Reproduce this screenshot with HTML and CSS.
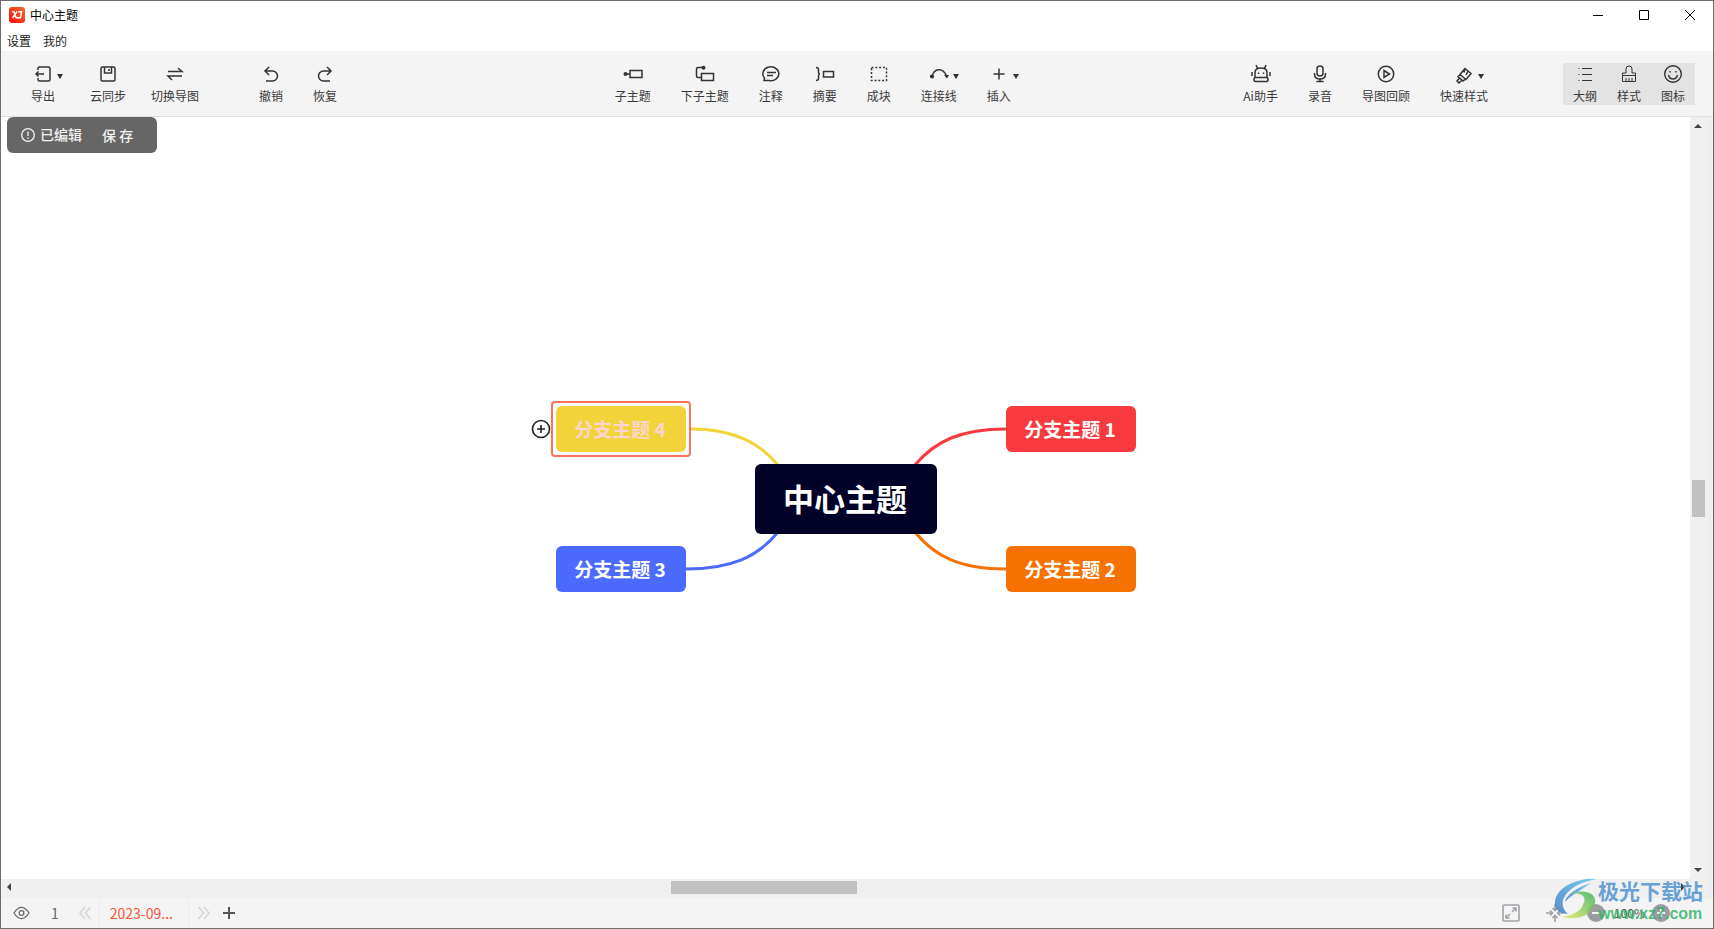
FILE: index.html
```html
<!DOCTYPE html>
<html lang="zh-CN">
<head>
<meta charset="utf-8">
<title>中心主题</title>
<link rel="stylesheet" href="styles.css">
</head>
<body>
<div class="window">
  <header class="titlebar">
    <svg class="app-logo" viewBox="0 0 16 16"><defs><linearGradient id="lg" x1="1" y1="0" x2="0" y2="1"><stop offset="0" stop-color="#f26b2c"/><stop offset="1" stop-color="#f80d0d"/></linearGradient></defs><rect width="16" height="16" rx="3" fill="url(#lg)"/><path d="M3 4.700h1.800l2.400 6.100H9M8 4.500l-4.500 6.500M9.200 4.700h3.300L11.500 10.800H9" fill="none" stroke="#fff" stroke-width="1.500"/></svg>
    <span class="app-title">中心主题</span>
    <div class="window-buttons">
      <button aria-label="最小化"><svg viewBox="0 0 10 10"><path d="M0 5.500h10"/></svg></button>
      <button aria-label="最大化"><svg viewBox="0 0 10 10"><path d="M.5.5h9v9h-9z"/></svg></button>
      <button aria-label="关闭"><svg viewBox="0 0 10 10"><path d="M0 0l10 10M10 0L0 10"/></svg></button>
    </div>
  </header>
  <nav class="menu"><button>设置</button><button>我的</button></nav>

  <div class="toolbar">
    <div class="tools tools-file">
      <button class="tool tool-export"><span class="glyph"><svg viewBox="0 0 20 20"><path d="M5 6V4.500Q5 3 6.500 3h9Q17 3 17 4.500v11Q17 17 15.500 17h-9Q5 17 5 15.500V14M3 10h8M5.500 7.500L3 10l2.500 2.500"/></svg><i class="caret"></i></span>导出</button>
      <button class="tool"><span class="glyph"><svg viewBox="0 0 20 20"><rect x="3" y="3" width="14" height="14" rx="1.500"/><path d="M6.500 3v6h7V3M11 5v2"/></svg></span>云同步</button>
      <button class="tool tool-switch"><span class="glyph"><svg viewBox="0 0 20 20"><path d="M3 7.500h14L13 4M17 12H3l4 4"/></svg></span>切换导图</button>
      <button class="tool"><span class="glyph"><svg viewBox="0 0 20 20"><path d="M8 3L4 7l4 4M4 7h7.500a5 5 0 0 1 0 10H5"/></svg></span>撤销</button>
      <button class="tool"><span class="glyph"><svg viewBox="0 0 20 20"><path d="M12 3l4 4-4 4M16 7H8.500a5 5 0 0 0 0 10H15"/></svg></span>恢复</button>
    </div>
    <div class="tools tools-topic">
      <button class="tool"><span class="glyph"><svg viewBox="0 0 20 20"><path d="M2 10h5M7 6.500h12v7H7z"/><circle class="solid" cx="2.500" cy="10" r="2"/></svg></span>子主题</button>
      <button class="tool"><span class="glyph"><svg viewBox="0 0 20 20"><path d="M8 3.500H3Q1.500 3.500 1.500 5v7q0 1.500 1.500 1.500h3"/><path d="M6.500 9.500h12v7h-12z"/><circle class="solid" cx="8.500" cy="3.800" r="2"/></svg></span>下子主题</button>
      <button class="tool"><span class="glyph"><svg viewBox="0 0 20 20"><path d="M3.500 14A8 6.900 0 1 1 8 16.500H3zM6 8.500h9M6 11.500h6"/></svg></span>注释</button>
      <button class="tool"><span class="glyph"><svg viewBox="0 0 20 20"><path d="M1 3.500q2.500 0 2.500 2v2.500q0 2 1.500 2-1.500 0-1.500 2v2.500q0 2-2.500 2M8.500 7.500h10v5.500h-10z"/></svg></span>摘要</button>
      <button class="tool"><span class="glyph"><svg viewBox="0 0 20 20"><path stroke-dasharray="2 1.800" d="M2.500 3.500h15v13h-15z"/></svg></span>成块</button>
      <button class="tool"><span class="glyph"><svg viewBox="0 0 20 20"><path d="M3 12.500C5 4 14 3 17.500 12"/><circle class="solid" cx="3" cy="12.500" r="2.100"/><path class="solid" d="M15 11h5l-2 3.500z"/></svg><i class="caret"></i></span>连接线</button>
      <button class="tool"><span class="glyph"><svg viewBox="0 0 20 20"><path d="M10 4.500v11M4.500 10h11"/></svg><i class="caret"></i></span>插入</button>
    </div>
    <div class="tools tools-extra">
      <button class="tool"><span class="glyph"><svg viewBox="0 0 20 20"><path d="M4 13V8.500Q4 4 10 4t6 4.500V13M5 1l1.500 3.500M15 1l-1.500 3.500M1 8v4M19 8v4M4.500 13.500h11q1.500 0 1.500 2t-1.500 2h-11q-1.500 0-1.500-2t1.500-2zM7.500 8.500v1.500M12.500 8.500v1.500"/></svg></span>Ai助手</button>
      <button class="tool"><span class="glyph"><svg viewBox="0 0 20 20"><rect x="7" y="2" width="6" height="10" rx="3"/><path d="M4.500 9v1q0 5 5.500 5t5.500-5V9M10 15v2.500M6.500 17.500h7"/></svg></span>录音</button>
      <button class="tool"><span class="glyph"><svg viewBox="0 0 20 20"><circle cx="10" cy="10" r="7.700"/><path d="M8 6.500l5.500 3.500L8 13.500z"/></svg></span>导图回顾</button>
      <button class="tool"><span class="glyph"><svg viewBox="0 0 20 20"><path d="M11 4.500l6 5-5 6-6-5zM6.500 10.500L4 12.500l5 4.500 2.500-2M5.500 14L3 17l2 2 3-3M11 4.500l-1 4M14 7l-2 4"/></svg><i class="caret"></i></span>快速样式</button>
    </div>
    <div class="panel-switch">
      <button class="tool thin"><span class="glyph"><svg viewBox="0 0 20 20"><path d="M7 4.500h10M7 10.500h10M7 16.500h10M3.500 4.500h1M3.500 10.500h1M3.500 16.500h1"/></svg></span>大纲</button>
      <button class="tool thin"><span class="glyph"><svg viewBox="0 0 20 20"><path d="M3.500 11.500V9H7V5a3 3 0 0 1 6 0v4h3.500v2.500zM3.500 11.500V17.500h13v-6M7 14v3.500M10 14v3.500M13 14v3.500"/></svg></span>样式</button>
      <button class="tool thin"><span class="glyph"><svg viewBox="0 0 20 20"><circle cx="10" cy="10" r="8.300" stroke-width="1.400"/><path stroke-width="1.400" d="M5.500 11q1 4 4.500 4t4.500-4M7 7v1.500M13 7v1.500"/></svg></span>图标</button>
    </div>
  </div>

  <main class="workspace">
    <section class="canvas">
      <div class="save-toast"><svg viewBox="0 0 14 14"><circle cx="7" cy="7" r="6.300"/><path d="M7 3.500v4.500M7 9.500V11"/></svg><span>已编辑</span><button>保 存</button></div>
      <div class="map">
        <svg class="links" viewBox="0 0 610 192"><path stroke="#f2d33a" d="M160 28c40 0 67 12 87 36"/><path stroke="#4c6bfe" d="M155 168c45 0 72-12 92-37"/><path stroke="#f63a3f" d="M475 28c-45 0-71 12-91 36"/><path stroke="#f77103" d="M475 168c-45 0-71-12-91-37"/></svg>
        <button class="add-node" aria-label="添加"><svg viewBox="0 0 20 20"><circle cx="10" cy="10" r="8.500"/><path d="M10 6v8M6 10h8"/></svg></button>
        <div class="selection"></div>
        <div class="node node-4">分支主题 4</div>
        <div class="node node-3">分支主题 3</div>
        <div class="node node-1">分支主题 1</div>
        <div class="node node-2">分支主题 2</div>
        <div class="node node-root">中心主题</div>
      </div>
    </section>
    <div class="scroll-y"><i class="arrow up"></i><i class="thumb"></i><i class="arrow down"></i></div>
    <div class="scroll-x"><i class="arrow left"></i><i class="thumb"></i><i class="arrow right"></i></div>
  </main>

  <footer class="statusbar">
    <button class="eye" aria-label="预览"><svg viewBox="0 0 18 14"><path d="M1 7q8-12 16 0-8 12-16 0z"/><circle cx="9" cy="7" r="2.500"/></svg></button>
    <span class="page-count">1</span>
    <button class="chevrons" aria-label="上一页"><svg viewBox="0 0 12 14"><path d="M6 1L1 7l5 6M11.500 1l-5 6 5 6"/></svg></button>
    <button class="sheet">2023-09...</button>
    <button class="chevrons" aria-label="下一页"><svg viewBox="0 0 12 14"><path d="M.5 1l5 6-5 6M6 1l5 6-5 6"/></svg></button>
    <button class="add-sheet" aria-label="新建"><svg viewBox="0 0 12 12"><path d="M6 0v12M0 6h12"/></svg></button>
    <div class="zoom">
      <button aria-label="全屏"><svg class="line" viewBox="0 0 18 18"><rect x="1" y="1" width="16" height="16" rx="1"/><path d="M10.500 4H14v3.500M14 4l-4 4M4 10.500V14h3.500M4 14l4-4"/></svg></button>
      <button aria-label="适应画布"><svg class="line" viewBox="0 0 18 18"><path d="M0 9h6M4 6.500L6.500 9 4 11.500M18 9h-6M14 6.500L11.500 9l2.500 2.500M9 0v6M6.500 4L9 6.500 11.500 4M9 18v-6M6.500 14L9 11.500l2.500 2.500"/></svg></button>
      <div class="zoom-level"><button aria-label="缩小"><svg viewBox="0 0 18 18"><circle cx="9" cy="9" r="9" fill="#9b9ca3"/><path d="M5 9h8" stroke="#f4f4f4" stroke-width="2"/></svg></button>
      <span class="percent">100%</span>
      <button aria-label="放大"><svg viewBox="0 0 18 18"><circle cx="9" cy="9" r="9" fill="#9b9ca3"/><path d="M5 9h8M9 5v8" stroke="#f4f4f4" stroke-width="2"/></svg></button></div>
    </div>
  </footer>

  <div class="watermark">
    <svg viewBox="0 0 44 42"><defs><linearGradient id="blue" x1="1" y1="0" x2="0" y2="1"><stop offset="0" stop-color="#5fc4ee"/><stop offset="1" stop-color="#3678c4"/></linearGradient><linearGradient id="green" x1="1" y1="0" x2="0" y2="1"><stop offset="0" stop-color="#35b25a"/><stop offset="1" stop-color="#e6e860"/></linearGradient></defs><path fill="url(#blue)" d="M43 1C25-1 2 9 1 24c-1 7 4 11 13 12-8-7-7-16 2-24C23 6 32 3 43 1z"/><path fill="url(#blue)" d="M37 5C23 9 12 17 11 24c6-7 15-11 26-19z"/><path fill="url(#green)" d="M16 16c11-2 16 2 14 8-2 8-9 13-22 15 17 4 30-2 33-14 2-10-11-15-25-9z"/></svg>
    <div class="watermark-text"><span class="wm-name">极光下载站</span><span class="wm-url">www.xz7.com</span></div>
  </div>
</div>
</body>
</html>
```
FILE: styles.css
```css
* { box-sizing: border-box; }
html, body { height: 100%; }
body { margin: 0; font-family: "Noto Sans CJK SC", sans-serif; font-size: 12px; color: #222; }
button { border: 0; margin: 0; padding: 0; background: none; font: inherit; color: inherit; cursor: pointer; }
svg { display: block; fill: none; }

.window { position: relative; display: flex; flex-direction: column; height: 100vh; border: 1px solid #6c6c6c; background: #fff; overflow: hidden; }

.titlebar { display: flex; align-items: center; height: 28px; padding-left: 8px; color: #000; }
.app-logo { width: 16px; height: 16px; margin-right: 5px; }
.app-title { line-height: 18px; padding-bottom: 1px; }
.window-buttons { display: flex; margin-left: auto; }
.window-buttons button { width: 46px; height: 28px; display: grid; place-items: center; }
.window-buttons svg { width: 10px; height: 10px; stroke: #000; }

.menu { display: flex; align-items: center; gap: 12px; height: 22px; padding: 2px 0 0 6px; line-height: 20px; }

.toolbar { display: flex; align-items: center; height: 66px; background: #f4f4f4; border-bottom: 1px solid #dfdfdf; padding: 0 18px 0 15px; color: #3a3a3a; }
.tools, .panel-switch { display: flex; }
.tools-file { flex: 11 0 auto; }
.tools-topic { flex: 9 0 auto; }
.tool { display: flex; flex-direction: column; align-items: center; height: 42px; padding: 0 15px; line-height: 18px; }
.tool-export { margin-right: 5px; }
.tool-switch { margin: 0 30px 0 -5px; }
.glyph { position: relative; display: block; padding: 1px 0 3px; }
.glyph svg { width: 20px; height: 20px; stroke: #333; stroke-width: 1.5; }
.solid { fill: #333; stroke: none; }
.caret { position: absolute; left: 24px; top: 11px; border: 3px solid transparent; border-top: 5px solid #333; border-bottom: 0; }
.panel-switch { margin-left: 60px; background: #e3e3e3; }
.thin { padding: 0 10px; }
.thin svg { stroke-width: 1; }

.workspace { flex: 1; min-height: 0; display: grid; grid-template: minmax(0, 1fr) 18px / minmax(0, 1fr) 18px; padding-right: 5px; background: #eceef2; }
.canvas { position: relative; background: #fff; display: grid; place-items: center; overflow: hidden; }
.save-toast { position: absolute; left: 6px; top: 0; display: flex; align-items: center; width: 150px; height: 36px; padding-left: 14px; border-radius: 6px; background: #666; color: #f2f2f2; font-size: 14px; font-weight: 500; }
.save-toast svg { width: 14px; height: 14px; stroke: #f2f2f2; stroke-width: 1.3; margin-right: 5px; }
.save-toast span { padding-bottom: 2px; }
.save-toast button { margin-left: 20px; }

.map { position: relative; width: 610px; height: 192px; margin: 0 19px 2px 0; }
.links { position: absolute; inset: 0; stroke-width: 3; }
.node { position: absolute; display: grid; place-items: center; width: 130px; height: 46px; padding: 0 2px 2px 0; border-radius: 6px; color: #fff; font-size: 19px; font-weight: 700; white-space: nowrap; }
.node-1 { left: 475px; top: 5px; background: #f63a3f; }
.node-2 { left: 475px; top: 145px; background: #f77103; }
.node-3 { left: 25px; top: 145px; background: #4c6bfe; }
.node-4 { left: 25px; top: 5px; background: #f2d33a; color: #fbd5cf; }
.node-root { left: 224px; top: 63px; width: 182px; height: 70px; padding-bottom: 4px; background: #010127; font-size: 31px; }
.selection { position: absolute; left: 20px; top: 0; width: 140px; height: 56px; border: 2px solid #fb735c; border-radius: 4px; }
.add-node { position: absolute; left: 0; top: 18px; }
.add-node svg { width: 20px; height: 20px; stroke: #222; stroke-width: 1.6; }

.scroll-y, .scroll-x { display: flex; align-items: center; background: #f0f0f0; }
.scroll-y { flex-direction: column; padding: 7px 2px 7px 0; }
.scroll-x { padding: 0 6px 2px; grid-column: 1 / 3; }
.thumb { background: #c1c1c1; }
.scroll-y .thumb { width: 13px; height: 37px; margin: auto 0; }
.scroll-x .thumb { width: 186px; height: 13px; margin-left: 660px; margin-right: auto; }
.arrow { border: 4px solid transparent; }
.up { border-top: 0; border-bottom-color: #444; }
.down { border-bottom: 0; border-top-color: #444; }
.left { border-left: 0; border-right-color: #444; }
.right { border-right: 0; border-left-color: #444; margin-right: 17px; }

.statusbar { display: flex; align-items: center; height: 31px; background: #f4f4f4; border-top: 1px solid #ededed; padding: 0 43px 0 12px; font-size: 14px; color: #666; }
.eye svg { width: 17px; height: 14px; stroke: #666; stroke-width: 1.3; }
.page-count { margin: 0 20px 0 21px; }
.chevrons svg { width: 12px; height: 14px; stroke: #d6d6d6; stroke-width: 1.5; }
.sheet { width: 90px; height: 30px; margin: 0 9px 0 8px; border: 1px solid #ebebeb; border-width: 0 1px; padding: 0 10px; color: #fa553a; text-align: left; }
.add-sheet { margin-left: 13px; }
.add-sheet svg { width: 12px; height: 12px; stroke: #555; stroke-width: 2; }
.zoom { display: flex; align-items: center; gap: 26px; margin-left: auto; padding-bottom: 1px; }
.zoom svg { width: 18px; height: 18px; }
.zoom .line { stroke: #a0a2a8; stroke-width: 1.6; }
.zoom-level { display: flex; align-items: center; gap: 9px; margin-left: -3px; }
.percent { width: 29px; font-size: 12px; text-align: center; color: #555; }

.watermark { position: absolute; right: 8px; bottom: 2px; display: flex; align-items: flex-start; opacity: .82; pointer-events: none; }
.watermark svg { width: 44px; height: 42px; }
.watermark-text { display: flex; flex-direction: column; width: 107px; white-space: nowrap; }
.wm-name { color: #4a90d2; font-size: 21px; line-height: 24px; font-weight: 700; }
.wm-url { color: #35b368; font-family: "Liberation Sans", sans-serif; font-size: 16px; line-height: 24px; font-weight: 700; }
```
